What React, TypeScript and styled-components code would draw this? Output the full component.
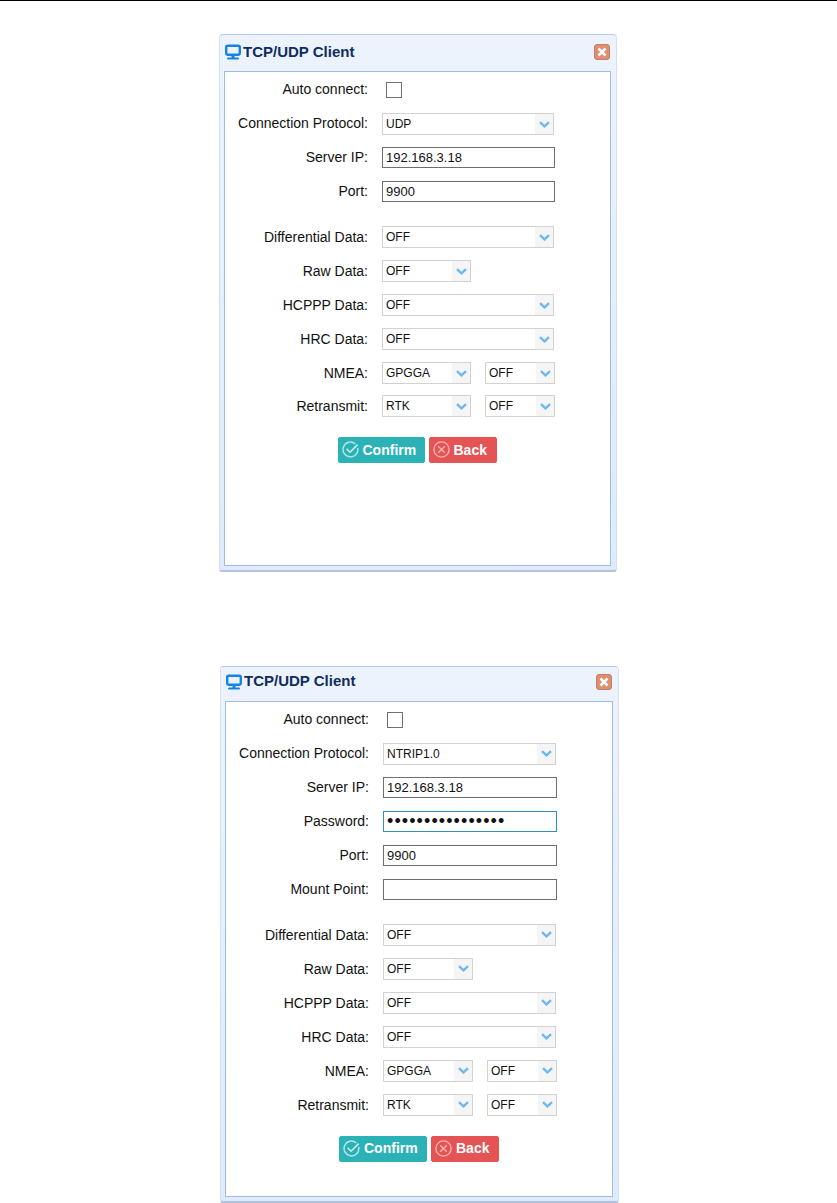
import styled, { createGlobalStyle } from "styled-components";

const GlobalStyle = createGlobalStyle`
    html, body {
        margin: 0;
        padding: 0;
        background: #fff;
        font-family: "Liberation Sans", Arial, sans-serif;
    }
`;

const Page = styled.div`
    width: 837px;
    height: 1203px;
    overflow: hidden;
    border-top: 1px solid #000;
    box-sizing: border-box;
    padding-top: 33px;
    display: flex;
    flex-direction: column;
    gap: 94px;
`;

const Dialog = styled.section<{ $left: number; $width: number }>`
    box-sizing: border-box;
    width: ${p => p.$width}px;
    height: 538px;
    margin-left: ${p => p.$left}px;
    padding: 0 5px 4px 4px;
    display: flex;
    flex-direction: column;
    background: linear-gradient(#edf3fd, #dfeafc);
    border: 1px solid #d3e0f4;
    border-top-color: #b4cbef;
    border-bottom: 2px solid #b4c2dc;
    border-radius: 4px 4px 3px 3px;
`;

const TitleBar = styled.header<{ $height: number; $bottom: number }>`
    height: ${p => p.$height}px;
    box-sizing: border-box;
    padding: 0 0 ${p => p.$bottom}px 1px;
    flex: none;
    display: flex;
    align-items: center;
`;

const Title = styled.h1`
    flex: 1;
    margin: 0 0 2px 2px;
    font-size: 15px;
    font-weight: 700;
    color: #0f2d5e;
`;

const CloseButton = styled.button`
    box-sizing: border-box;
    width: 16px;
    height: 16px;
    padding: 0;
    margin-right: 1px;
    display: flex;
    align-items: center;
    justify-content: center;
    background: #e08d70;
    border: 1px solid #bd8068;
    border-radius: 3px;
`;

const Panel = styled.div`
    flex: 1;
    background: #fff;
    border: 1px solid #9dbde8;
`;

const Row = styled.div<{ $height: number; $spaced?: boolean }>`
    height: ${p => p.$height}px;
    margin-top: ${p => (p.$spaced ? 12 : 0)}px;
    display: grid;
    grid-template-columns: 143px auto;
    column-gap: 14px;
    align-items: center;
    justify-content: start;
`;

const Label = styled.label`
    font-size: 14px;
    color: #111;
    text-align: right;
`;

const Controls = styled.div`
    display: flex;
    align-items: center;
    gap: 14px;
`;

const CheckBox = styled.span`
    box-sizing: border-box;
    display: block;
    width: 16px;
    height: 16px;
    margin: 2px 0 0 4px;
    background: #fff;
    border: 1px solid #6f6f6f;
`;

const TextInput = styled.input<{ $width: number; $focused?: boolean }>`
    box-sizing: border-box;
    width: ${p => p.$width}px;
    height: 21px;
    margin: 1px 0 0;
    padding: 0 3px;
    font-family: "Liberation Sans", Arial, sans-serif;
    font-size: 13px;
    color: #111;
    background: #fff;
    border: 1px solid ${p => (p.$focused ? "#2f8fc4" : "#6e6e6e")};
    border-radius: 0;
    outline: none;
    &[type="password"] {
        font-size: 18px;
        letter-spacing: 1.1px;
    }
`;

const Select = styled.div<{ $width: number; $lowered?: boolean }>`
    box-sizing: border-box;
    width: ${p => p.$width}px;
    height: 22px;
    margin-top: ${p => (p.$lowered ? 2 : 0)}px;
    display: flex;
    align-items: stretch;
    background: #fff;
    border: 1px solid #d2d2d2;
`;

const SelectValue = styled.span`
    flex: 1;
    padding-left: 3px;
    font-size: 12px;
    line-height: 21px;
    color: #111;
`;

const SelectArrow = styled.span`
    width: 18px;
    display: flex;
    align-items: center;
    justify-content: center;
    background: #f5f5f5;
`;

const Actions = styled.div<{ $top: number; $width: number }>`
    display: flex;
    justify-content: center;
    gap: 4px;
    margin-top: ${p => p.$top}px;
    width: ${p => p.$width}px;
`;

const ActionButton = styled.button<{ $color: string; $width: number }>`
    box-sizing: border-box;
    width: ${p => p.$width}px;
    height: 26px;
    padding: 0 0 1px 3px;
    display: flex;
    align-items: center;
    gap: 4px;
    font-family: "Liberation Sans", Arial, sans-serif;
    font-size: 14px;
    font-weight: 700;
    color: #fff;
    background: ${p => p.$color};
    border: 1px solid ${p => p.$color};
    border-radius: 2px;
`;

const MonitorIcon = () => (
    <svg width="16" height="16" viewBox="0 0 16 16">
        <rect x="1.2" y="1.7" width="13.6" height="9" rx="1.6" fill="none" stroke="#1583e6" strokeWidth="2.4" />
        <rect x="6.5" y="12" width="3" height="2" fill="#1583e6" />
        <rect x="2" y="13.6" width="12" height="2" rx="1" fill="#1583e6" />
    </svg>
);

const CloseIcon = () => (
    <svg width="10" height="10" viewBox="0 0 10 10">
        <path d="M1.5 1.5 8.5 8.5M8.5 1.5 1.5 8.5" stroke="#fff" strokeWidth="2.6" />
    </svg>
);

const ChevronIcon = () => (
    <svg width="11" height="7" viewBox="0 0 11 7">
        <path d="M1 1.2 5.5 5.4 10 1.2" fill="none" stroke="#6db9ee" strokeWidth="2.4" />
    </svg>
);

const ConfirmIcon = () => (
    <svg width="17" height="17" viewBox="0 0 17 17">
        <path d="M13.4 3A7.4 7.4 0 1 0 15.7 7" fill="none" stroke="#b5e3e3" strokeWidth="1.5" />
        <path d="M4.6 7.8 8 11.2 15.6 3.6" fill="none" stroke="#cdeeee" strokeWidth="1.6" />
    </svg>
);

const BackIcon = () => (
    <svg width="17" height="17" viewBox="0 0 17 17">
        <circle cx="8.5" cy="8.5" r="7.6" fill="none" stroke="#f3b5b2" strokeWidth="1.4" />
        <path d="M5.2 5.2 11.8 11.8M11.8 5.2 5.2 11.8" stroke="#f3b5b2" strokeWidth="1.4" />
    </svg>
);

const Dropdown = ({ value, width, lowered }: { value: string; width: number; lowered?: boolean }) => (
    <Select $width={width} $lowered={lowered}>
        <SelectValue>{value}</SelectValue>
        <SelectArrow>
            <ChevronIcon />
        </SelectArrow>
    </Select>
);

const Field = ({ label, children, spaced, height = 34 }: { label: string; children: React.ReactNode; spaced?: boolean; height?: number }) => (
    <Row $spaced={spaced} $height={height}>
        <Label>{label}</Label>
        <Controls>{children}</Controls>
    </Row>
);

const ClientDialog = ({ left, protocol, ntrip }: { left: number; protocol: string; ntrip?: boolean }) => {
    // the second capture is scaled a touch wider than the first
    const extra = ntrip ? 1 : 0;
    const wide = 172 + extra;
    const narrow = 89 + extra;
    const input = 173 + extra;

    return (
        <Dialog $left={left} $width={398 + extra}>
            <TitleBar $height={ntrip ? 34 : 36} $bottom={ntrip ? 4 : 2}>
                <MonitorIcon />
                <Title>TCP/UDP Client</Title>
                <CloseButton aria-label="Close">
                    <CloseIcon />
                </CloseButton>
            </TitleBar>
            <Panel>
                <Field label="Auto connect:">
                    <CheckBox />
                </Field>
                <Field label="Connection Protocol:">
                    <Dropdown value={protocol} width={wide} lowered />
                </Field>
                <Field label="Server IP:">
                    <TextInput $width={input} readOnly defaultValue="192.168.3.18" />
                </Field>
                {ntrip && (
                    <Field label="Password:">
                        <TextInput $width={input} $focused readOnly type="password" defaultValue="0000000000000000" />
                    </Field>
                )}
                <Field label="Port:">
                    <TextInput $width={input} readOnly defaultValue="9900" />
                </Field>
                {ntrip && (
                    <Field label="Mount Point:">
                        <TextInput $width={input} readOnly defaultValue="" />
                    </Field>
                )}
                <Field label="Differential Data:" spaced>
                    <Dropdown value="OFF" width={wide} />
                </Field>
                <Field label="Raw Data:">
                    <Dropdown value="OFF" width={narrow} />
                </Field>
                <Field label="HCPPP Data:">
                    <Dropdown value="OFF" width={wide} />
                </Field>
                <Field label="HRC Data:">
                    <Dropdown value="OFF" width={wide} />
                </Field>
                <Field label="NMEA:">
                    <Dropdown value="GPGGA" width={narrow} />
                    <Dropdown value="OFF" width={70} />
                </Field>
                <Field label="Retransmit:" height={ntrip ? 34 : 32}>
                    <Dropdown value="RTK" width={narrow} />
                    <Dropdown value="OFF" width={70} />
                </Field>
                <Actions $top={ntrip ? 14 : 15} $width={384 + extra * 2}>
                    <ActionButton $color="#2ab2b6" $width={87 + extra}>
                        <ConfirmIcon />
                        Confirm
                    </ActionButton>
                    <ActionButton $color="#e45454" $width={68}>
                        <BackIcon />
                        Back
                    </ActionButton>
                </Actions>
            </Panel>
        </Dialog>
    );
};

export default function App() {
    return (
        <Page>
            <GlobalStyle />
            <ClientDialog left={219} protocol="UDP" />
            <ClientDialog left={220} protocol="NTRIP1.0" ntrip />
        </Page>
    );
}
